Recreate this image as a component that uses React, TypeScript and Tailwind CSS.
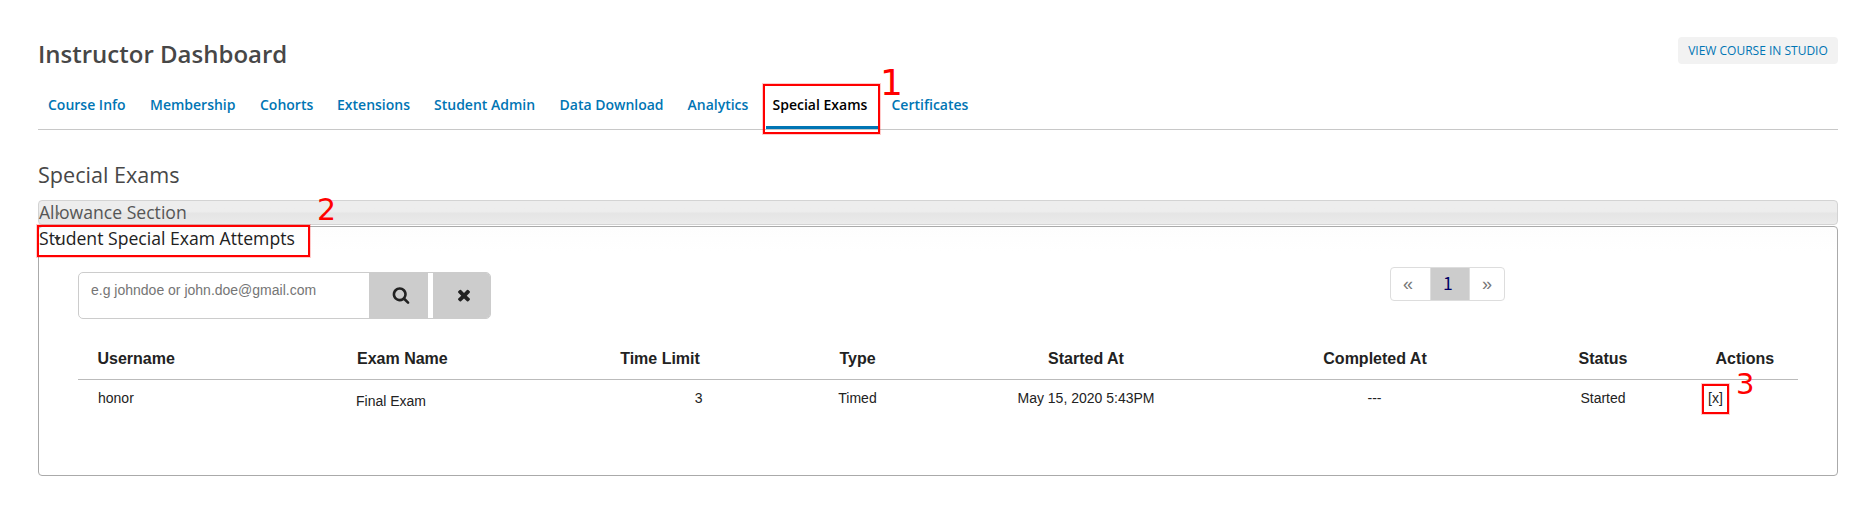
import React from "react";

const tabs = [
  { label: "Course Info", width: "w-[102px]" },
  { label: "Membership", width: "w-[110px]" },
  { label: "Cohorts", width: "w-[77px]" },
  { label: "Extensions", width: "w-[97px]" },
  { label: "Student Admin", width: "w-[125.5px]" },
  { label: "Data Download", width: "w-[128px]" },
  { label: "Analytics", width: "w-[85px]" },
  { label: "Special Exams", width: "w-[119px]", active: true },
  { label: "Certificates", width: "w-[90px]" },
];

const columns = "grid grid-cols-[259px_223px_200px_195px_261px_317px_140px_125px]";

function SearchIcon() {
  return (
    <svg className="size-[18px]" viewBox="0 0 1792 1792" fill="currentColor">
      <path d="M1216 832q0-185-131.5-316.5t-316.5-131.5-316.5 131.5-131.5 316.5 131.5 316.5 316.5 131.5 316.5-131.5 131.5-316.5zm512 832q0 52-38 90t-90 38q-54 0-90-38l-343-342q-179 124-399 124-143 0-273.5-55.5t-225-150-150-225-55.5-273.5 55.5-273.5 150-225 225-150 273.5-55.5 273.5 55.5 225 150 150 225 55.5 273.5q0 220-124 399l343 343q37 37 37 90z" />
    </svg>
  );
}

function ClearIcon() {
  return (
    <svg className="size-[18px]" viewBox="0 0 1792 1792" fill="currentColor">
      <path d="M1490 1322q0 40-28 68l-136 136q-28 28-68 28t-68-28l-294-294-294 294q-28 28-68 28t-68-28l-136-136q-28-28-28-68t28-68l294-294-294-294q-28-28-28-68t28-68l136-136q28-28 68-28t68 28l294 294 294-294q28-28 68-28t68 28l136 136q28 28 28 68t-28 68l-294 294 294 294q28 28 28 68z" />
    </svg>
  );
}

function Mark({ box, number, numberClass }: { box: string; number: string; numberClass: string }) {
  return (
    <>
      <div className={`absolute border-2 border-[#ff0000] shadow-[0_0_0_1px_rgba(255,0,0,0.2)] ${box}`} />
      <span className={`absolute font-['DejaVu_Sans',sans-serif] leading-none text-[#ff0000] ${numberClass}`}>{number}</span>
    </>
  );
}

export default function App() {
  return (
    <div className="relative h-[512px] w-[1876px] overflow-hidden bg-white px-[38px] font-['Open_Sans',sans-serif] whitespace-nowrap">
      <header className="flex h-[84px] items-start justify-between pt-[37px]">
        <h1 className="text-2xl leading-[34px] font-semibold text-[#474747]">Instructor Dashboard</h1>
        <a className="flex h-[27px] w-[160px] items-center justify-center rounded-[4px] bg-[#f2f2f2] text-[12px] text-[#0075b4] uppercase">
          View Course in Studio
        </a>
      </header>

      <nav className="flex h-[46px] border-b border-[#c8c8c8] pl-[10px] text-sm font-semibold text-[#0075b4]">
        {tabs.map((tab) => (
          <div key={tab.label} className={`relative h-[45px] shrink-0 pt-[11px] ${tab.width}`}>
            <span className={tab.active ? "text-black" : ""}>{tab.label}</span>
            {tab.active && <i className="absolute bottom-0 -left-[7px] h-[3px] w-[112px] bg-[#0075b4]" />}
          </div>
        ))}
      </nav>

      <h2 className="h-[70px] pt-[29px] text-[21.6px] leading-[32px] text-[#474747]">Special Exams</h2>

      <div className="relative h-[25px] rounded-[4px] border border-[#d3d3d3] bg-linear-to-b from-[#ededed] from-45% via-[#e5e5e5] via-55% to-[#ebebeb] text-[17.6px] leading-[23px] text-[#555555]">
        Allowance Section
        <svg className="absolute top-[9px] left-[17px] h-[7px] w-[4px]" viewBox="0 0 4 7" fill="#777777">
          <path d="M0 0l4 3.5-4 3.5z" />
        </svg>
      </div>

      <section className="mt-px h-[250px] rounded-[4px] border border-[#aaaaaa] bg-linear-to-b from-[#fdfdfd] to-white to-10%">
        <div className="relative h-[45px] text-[17.6px] leading-[23px] text-[#212121]">
          Student Special Exam Attempts
          <svg className="absolute top-[10px] left-[15px] h-[4px] w-[7px]" viewBox="0 0 7 4" fill="#333333">
            <path d="M0 0h7L3.5 4z" />
          </svg>
        </div>

        <div className="flex justify-between pr-[332px] pl-[39px] font-['Liberation_Sans',sans-serif]">
          <div className="flex h-[47px] w-[413px] overflow-hidden rounded-[5px] border border-[#cccccc] bg-white text-[#222222]">
            <div className="w-[290px] pt-[7px] pl-[12px] text-sm text-[#757575]">e.g johndoe or john.doe@gmail.com</div>
            <div className="flex w-[59px] items-center bg-[#cccccc] pb-[2px] pl-[22.5px]">
              <SearchIcon />
            </div>
            <div className="ml-[5px] flex flex-1 items-center bg-[#cccccc] pb-[2px] pl-[21.5px]">
              <ClearIcon />
            </div>
          </div>

          <div className="-mt-[5px] flex h-[34px] w-[115px] overflow-hidden rounded-[4px] border border-[#dddddd] text-lg leading-[33px] text-[#777777]">
            <span className="w-[40px] border-r border-[#dddddd] pl-[12px]">«</span>
            <span className="w-[39px] border-r border-[#dddddd] bg-[#cccccc] pl-[12px] font-['Noto_Sans_CJK_JP',sans-serif] text-[17.6px] leading-[30px] text-[#000066]">
              1
            </span>
            <span className="pl-[12px]">»</span>
          </div>
        </div>

        <div className="mx-[39px] mt-[21px] font-['Liberation_Sans',sans-serif] text-[#222222]">
          <div className={`${columns} h-[40px] border-b border-[#bbbbbb] pt-[7px] text-center text-base font-bold`}>
            <span className="pl-[19.5px] text-left">Username</span>
            <span className="pl-[20px] text-left">Exam Name</span>
            <span>Time Limit</span>
            <span>Type</span>
            <span className="pl-px">Started At</span>
            <span className="pl-px">Completed At</span>
            <span>Status</span>
            <span className="pl-[42.5px] text-left">Actions</span>
          </div>
          <div className={`${columns} pt-[8px] text-center text-sm`}>
            <span className="pl-[20px] text-left">honor</span>
            <span className="pt-[3px] pl-[19px] text-left">Final Exam</span>
            <span className="pr-[57.5px] text-right">3</span>
            <span>Timed</span>
            <span className="pl-px">May 15, 2020 5:43PM</span>
            <span>---</span>
            <span>Started</span>
            <span className="pl-[35px] text-left">[x]</span>
          </div>
        </div>
      </section>

      <Mark box="left-[763px] top-[84px] h-[50px] w-[117px]" number="1" numberClass="left-[880px] top-[65px] text-[36px]" />
      <Mark box="left-[37px] top-[225px] h-[32px] w-[273px]" number="2" numberClass="left-[317px] top-[195px] text-[30px]" />
      <Mark box="left-[1702px] top-[384px] h-[30px] w-[27px]" number="3" numberClass="left-[1736px] top-[370px] text-[29px]" />
    </div>
  );
}
